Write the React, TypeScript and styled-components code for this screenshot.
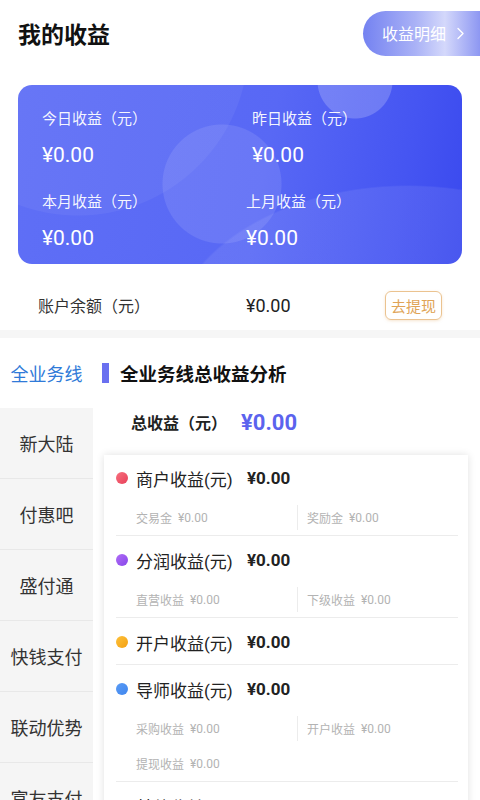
import React from "react";
import styled, { createGlobalStyle } from "styled-components";

const Global = createGlobalStyle`
  html, body { margin: 0; padding: 0; background: #fff; }
  body { font-family: Roboto, "Noto Sans CJK SC", sans-serif; color: #222; overflow-x: hidden; }
  * { box-sizing: border-box; }
`;

const Page = styled.div`
  width: 480px;
  background: #fff;
`;

const Header = styled.div`
  height: 68px;
  display: flex;
  align-items: center;
  justify-content: space-between;
  padding-left: 18px;
`;

const Title = styled.h1`
  margin: -3px 0 0;
  font-size: 23px;
  font-weight: 700;
  color: #111;
`;

const DetailButton = styled.div`
  width: 117px;
  height: 45px;
  border-radius: 23px 0 0 23px;
  background: linear-gradient(90deg, #7482f1 0%, #aab2f6 45%, #d4d8fb 70%, #8d97f2 100%);
  display: flex;
  align-items: center;
  padding-left: 19px;
  gap: 10px;
  color: #fff;
  font-size: 16px;
  margin-top: -2px;
`;

const Chevron = styled.svg`
  width: 9px;
  height: 13px;
`;

const EarnCard = styled.div`
  margin: 17px 18px 0;
  height: 179px;
  border-radius: 14px;
  padding: 24px 24px 12px;
  display: grid;
  grid-template-columns: 210px 1fr;
  row-gap: 23px;
  color: #fff;
  background:
    radial-gradient(circle at 337px -4px, rgba(255,255,255,0.2) 37px, rgba(255,255,255,0) 38px),
    radial-gradient(circle at 204px 99px, rgba(255,255,255,0.1) 59px, rgba(255,255,255,0) 60px),
    radial-gradient(circle at 60px -40px, rgba(255,255,255,0.05) 170px, rgba(255,255,255,0) 171px),
    radial-gradient(ellipse 240px 160px at 390px 260px, rgba(255,255,255,0.08) 99%, rgba(255,255,255,0) 100%),
    linear-gradient(100deg, #5f6ff6 0%, #5868f5 55%, #4555f2 85%, #3a49ee 100%);
`;

const EarnCell = styled.div<{ $shift?: number }>`
  display: flex;
  flex-direction: column;
  margin-left: ${(p) => p.$shift ?? 0}px;
`;

const EarnLabel = styled.div`
  font-size: 15px;
  line-height: 20px;
  color: rgba(255,255,255,0.95);
`;

const EarnValue = styled.div`
  margin-top: 12px;
  font-size: 21px;
  line-height: 28px;
`;

const BalanceRow = styled.div`
  margin-top: 16px;
  height: 50px;
  display: flex;
  align-items: center;
  padding-left: 38px;
`;

const BalanceLabel = styled.div`
  width: 208px;
  font-size: 16px;
  color: #333;
`;

const BalanceValue = styled.div`
  width: 139px;
  font-size: 18px;
  color: #222;
`;

const WithdrawButton = styled.div`
  width: 57px;
  height: 29px;
  border: 1.5px solid #ebc390;
  border-radius: 6px;
  color: #e0a456;
  font-size: 15px;
  display: flex;
  align-items: center;
  justify-content: center;
  box-shadow: 0 1px 3px rgba(230, 180, 120, 0.35);
`;

const Separator = styled.div`
  height: 8px;
  background: #f6f6f6;
`;

const Section = styled.div`
  display: flex;
  align-items: stretch;
`;

const Sidebar = styled.div`
  width: 93px;
  flex-shrink: 0;
  background: #f5f5f5;
  display: flex;
  flex-direction: column;
`;

const SideItem = styled.div<{ $active?: boolean }>`
  height: ${(p) => (p.$active ? 70 : 71)}px;
  display: flex;
  align-items: center;
  justify-content: center;
  font-size: 18px;
  background: ${(p) => (p.$active ? "#fff" : "#f5f5f5")};
  color: ${(p) => (p.$active ? "#2f7ad8" : "#333")};
  border-bottom: ${(p) => (p.$active ? "none" : "1px solid #e8e8e8")};
`;

const Content = styled.div`
  flex: 1;
  min-width: 0;
  display: flex;
  flex-direction: column;
`;

const SectionHead = styled.div`
  height: 70px;
  display: flex;
  align-items: center;
  padding-left: 9px;
  gap: 11px;
`;

const Bar = styled.div`
  width: 7px;
  height: 20px;
  background: #6a70f0;
`;

const SectionTitle = styled.div`
  font-size: 18.5px;
  font-weight: 700;
  color: #111;
`;

const TotalRow = styled.div`
  height: 28px;
  display: flex;
  align-items: center;
  padding-left: 38px;
  gap: 14px;
`;

const TotalLabel = styled.div`
  font-size: 16px;
  font-weight: 700;
  color: #222;
`;

const TotalValue = styled.div`
  font-size: 22px;
  font-weight: 700;
  color: #5b63ee;
`;

const IncomeCard = styled.div`
  margin: 19px 12px 0 11px;
  background: #fff;
  box-shadow: 0 0 8px rgba(0, 0, 0, 0.12);
  padding: 0 10px 20px 12px;
`;

const IncomeRow = styled.div<{ $hasSub?: boolean; $first?: boolean }>`
  padding-top: ${(p) => (p.$first ? 11 : 12)}px;
  padding-bottom: ${(p) => (p.$hasSub ? 0 : 10)}px;
  border-bottom: 1px solid #ececec;
`;

const IncomeHead = styled.div`
  height: 24px;
  display: flex;
  align-items: center;
`;

const Dot = styled.span<{ $from: string; $to: string }>`
  width: 12px;
  height: 12px;
  border-radius: 50%;
  background: linear-gradient(135deg, ${(p) => p.$from}, ${(p) => p.$to});
  margin-right: 8px;
  flex-shrink: 0;
`;

const IncomeName = styled.span`
  font-size: 17px;
  color: #222;
  width: 111px;
`;

const IncomeValue = styled.span`
  font-size: 17px;
  font-weight: 700;
  color: #222;
`;

const SubGrid = styled.div`
  margin-top: 10px;
  margin-left: 20px;
  display: grid;
  grid-template-columns: 1fr 1fr;
`;

const SubCell = styled.div<{ $divided?: boolean }>`
  height: 35px;
  display: flex;
  align-items: center;
  gap: 6px;
  font-size: 12px;
  color: #b3b3b3;
  padding-left: ${(p) => (p.$divided ? 10 : 0)}px;
  position: relative;
  &::before {
    content: "";
    display: ${(p) => (p.$divided ? "block" : "none")};
    position: absolute;
    left: 0;
    top: 5px;
    bottom: 5px;
    width: 1px;
    background: #ececec;
  }
`;

type Sub = { label: string; value: string };
type Income = { name: string; from: string; to: string; subs: Sub[] };

const incomes: Income[] = [
  { name: "商户收益(元)", from: "#f7707e", to: "#e8405a", subs: [{ label: "交易金", value: "¥0.00" }, { label: "奖励金", value: "¥0.00" }] },
  { name: "分润收益(元)", from: "#b06cf6", to: "#8748ea", subs: [{ label: "直营收益", value: "¥0.00" }, { label: "下级收益", value: "¥0.00" }] },
  { name: "开户收益(元)", from: "#fdc13a", to: "#f4a012", subs: [] },
  { name: "导师收益(元)", from: "#5a9bf5", to: "#3f86ee", subs: [{ label: "采购收益", value: "¥0.00" }, { label: "开户收益", value: "¥0.00" }, { label: "提现收益", value: "¥0.00" }] },
  { name: "其他收益(元)", from: "#3ccfa0", to: "#20b887", subs: [] },
];

const sideItems = ["新大陆", "付惠吧", "盛付通", "快钱支付", "联动优势", "富友支付", "拉卡拉"];

export default function App() {
  return (
    <Page>
      <Global />
      <Header>
        <Title>我的收益</Title>
        <DetailButton>
          <span>收益明细</span>
          <Chevron viewBox="0 0 9 13">
            <path d="M2 1.5 L7 6.5 L2 11.5" fill="none" stroke="#fff" strokeWidth="1.4" strokeLinecap="round" strokeLinejoin="round" />
          </Chevron>
        </DetailButton>
      </Header>

      <EarnCard>
        <EarnCell>
          <EarnLabel>今日收益（元）</EarnLabel>
          <EarnValue>¥0.00</EarnValue>
        </EarnCell>
        <EarnCell>
          <EarnLabel>昨日收益（元）</EarnLabel>
          <EarnValue>¥0.00</EarnValue>
        </EarnCell>
        <EarnCell>
          <EarnLabel>本月收益（元）</EarnLabel>
          <EarnValue>¥0.00</EarnValue>
        </EarnCell>
        <EarnCell $shift={-6}>
          <EarnLabel>上月收益（元）</EarnLabel>
          <EarnValue>¥0.00</EarnValue>
        </EarnCell>
      </EarnCard>

      <BalanceRow>
        <BalanceLabel>账户余额（元）</BalanceLabel>
        <BalanceValue>¥0.00</BalanceValue>
        <WithdrawButton>去提现</WithdrawButton>
      </BalanceRow>

      <Separator />

      <Section>
        <Sidebar>
          <SideItem $active>全业务线</SideItem>
          {sideItems.map((s) => (
            <SideItem key={s}>{s}</SideItem>
          ))}
        </Sidebar>
        <Content>
          <SectionHead>
            <Bar />
            <SectionTitle>全业务线总收益分析</SectionTitle>
          </SectionHead>
          <TotalRow>
            <TotalLabel>总收益（元）</TotalLabel>
            <TotalValue>¥0.00</TotalValue>
          </TotalRow>
          <IncomeCard>
            {incomes.map((it, i) => (
              <IncomeRow key={it.name} $hasSub={it.subs.length > 0} $first={i === 0}>
                <IncomeHead>
                  <Dot $from={it.from} $to={it.to} />
                  <IncomeName>{it.name}</IncomeName>
                  <IncomeValue>¥0.00</IncomeValue>
                </IncomeHead>
                {it.subs.length > 0 && (
                  <SubGrid>
                    {it.subs.map((s, j) => (
                      <SubCell key={s.label} $divided={j % 2 === 1}>
                        <span>{s.label}</span>
                        <span>{s.value}</span>
                      </SubCell>
                    ))}
                  </SubGrid>
                )}
              </IncomeRow>
            ))}
          </IncomeCard>
        </Content>
      </Section>
    </Page>
  );
}
